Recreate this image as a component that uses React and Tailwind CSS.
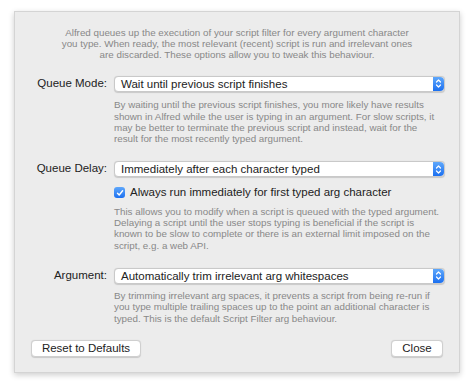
const font = { fontFamily: '"Liberation Sans", Arial, sans-serif' };

function Stepper() {
  return (
    <div className="flex h-full w-[11px] items-center justify-center rounded-r-[4px] bg-gradient-to-b from-[#5ea7fb] to-[#1a6ff0]">
      <svg width="7" height="11" viewBox="0 0 7 11" fill="none">
        <path d="M1.5 4 L3.5 2 L5.5 4" stroke="white" strokeWidth="1.2" strokeLinecap="round" strokeLinejoin="round" />
        <path d="M1.5 7 L3.5 9 L5.5 7" stroke="white" strokeWidth="1.2" strokeLinecap="round" strokeLinejoin="round" />
      </svg>
    </div>
  );
}

function Select({ value }) {
  return (
    <div className="flex h-[16px] w-[331px] items-stretch rounded-[4px] border border-[#c9c9c9] bg-white shadow-[0_0.5px_1px_rgba(0,0,0,0.15)]">
      <div className="flex-1 pl-[6px] text-[11.5px] leading-[14px] text-[#222]">{value}</div>
      <Stepper />
    </div>
  );
}

function Row({ label, value, className }) {
  return (
    <div className={"flex items-center " + (className || "")}>
      <div className="w-[92px] text-right text-[11.5px] text-[#222]">{label}</div>
      <div className="ml-[7px]">
        <Select value={value} />
      </div>
    </div>
  );
}

function Desc({ lines, className }) {
  return (
    <div className={"ml-[99px] whitespace-nowrap text-[9.8px] leading-[11.3px] text-[#888] " + (className || "")}>
      {lines.map((l, i) => (
        <div key={i}>{l}</div>
      ))}
    </div>
  );
}

export default function App() {
  return (
    <div className="h-[390px] w-[474px] bg-white pl-[14px] pt-[11px]" style={font}>
      <div className="flex h-[362px] w-[446px] flex-col border border-[#d4d4d4] bg-[#ececec] shadow-[0_2px_6px_rgba(0,0,0,0.2)]">
        <div className="mt-[15px] whitespace-nowrap text-center text-[9.8px] leading-[11px] text-[#888]">
          <div>Alfred queues up the execution of your script filter for every argument character</div>
          <div>you type. When ready, the most relevant (recent) script is run and irrelevant ones</div>
          <div>are discarded. These options allow you to tweak this behaviour.</div>
        </div>

        <Row className="mt-[15px]" label="Queue Mode:" value="Wait until previous script finishes" />
        <Desc
          className="mt-[7px]"
          lines={[
            "By waiting until the previous script finishes, you more likely have results",
            "shown in Alfred while the user is typing in an argument. For slow scripts, it",
            "may be better to terminate the previous script and instead, wait for the",
            "result for the most recently typed argument.",
          ]}
        />

        <Row className="mt-[16px]" label="Queue Delay:" value="Immediately after each character typed" />
        <div className="ml-[99px] mt-[8px] flex h-[14px] items-center">
          <div className="flex h-[11px] w-[11px] items-center justify-center rounded-[3px] bg-gradient-to-b from-[#5ea7fb] to-[#1a6ff0]">
            <svg width="8" height="8" viewBox="0 0 8 8" fill="none">
              <path d="M1.5 4.2 L3.2 6 L6.6 1.8" stroke="white" strokeWidth="1.4" strokeLinecap="round" strokeLinejoin="round" />
            </svg>
          </div>
          <span className="ml-[5px] text-[11.5px] text-[#222]">Always run immediately for first typed arg character</span>
        </div>
        <Desc
          className="mt-[6px]"
          lines={[
            "This allows you to modify when a script is queued with the typed argument.",
            "Delaying a script until the user stops typing is beneficial if the script is",
            "known to be slow to complete or there is an external limit imposed on the",
            "script, e.g. a web API.",
          ]}
        />

        <Row className="mt-[16px]" label="Argument:" value="Automatically trim irrelevant arg whitespaces" />
        <Desc
          className="mt-[6px]"
          lines={[
            "By trimming irrelevant arg spaces, it prevents a script from being re-run if",
            "you type multiple trailing spaces up to the point an additional character is",
            "typed. This is the default Script Filter arg behaviour.",
          ]}
        />

        <div className="mt-[16px] flex justify-between px-[16px]">
          <button className="h-[17px] w-[110px] rounded-[4px] border border-[#cfcfcf] bg-white text-[11.5px] leading-[15px] text-[#222] shadow-[0_0.5px_1px_rgba(0,0,0,0.15)]">
            Reset to Defaults
          </button>
          <button className="h-[17px] w-[52px] rounded-[4px] border border-[#cfcfcf] bg-white text-[11.5px] leading-[15px] text-[#222] shadow-[0_0.5px_1px_rgba(0,0,0,0.15)]">
            Close
          </button>
        </div>
      </div>
    </div>
  );
}
